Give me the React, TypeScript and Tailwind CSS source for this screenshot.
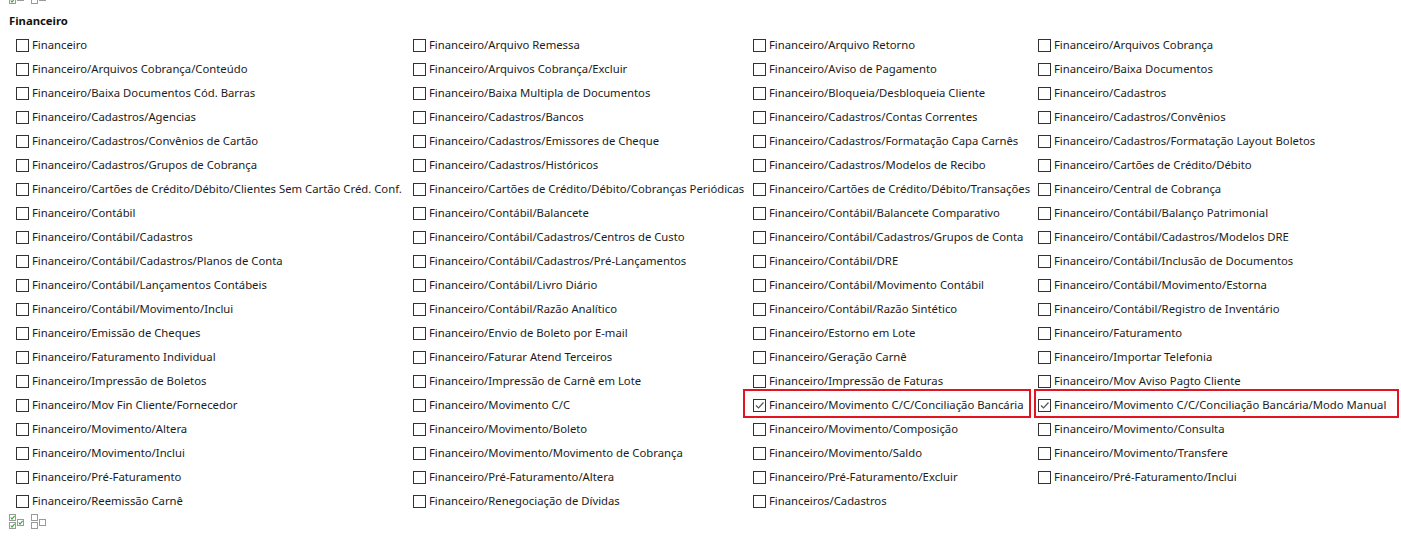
import React from "react";

const rows: [string, boolean][][] = [
  [["Financeiro", false], ["Financeiro/Arquivo Remessa", false], ["Financeiro/Arquivo Retorno", false], ["Financeiro/Arquivos Cobrança", false]],
  [["Financeiro/Arquivos Cobrança/Conteúdo", false], ["Financeiro/Arquivos Cobrança/Excluir", false], ["Financeiro/Aviso de Pagamento", false], ["Financeiro/Baixa Documentos", false]],
  [["Financeiro/Baixa Documentos Cód. Barras", false], ["Financeiro/Baixa Multipla de Documentos", false], ["Financeiro/Bloqueia/Desbloqueia Cliente", false], ["Financeiro/Cadastros", false]],
  [["Financeiro/Cadastros/Agencias", false], ["Financeiro/Cadastros/Bancos", false], ["Financeiro/Cadastros/Contas Correntes", false], ["Financeiro/Cadastros/Convênios", false]],
  [["Financeiro/Cadastros/Convênios de Cartão", false], ["Financeiro/Cadastros/Emissores de Cheque", false], ["Financeiro/Cadastros/Formatação Capa Carnês", false], ["Financeiro/Cadastros/Formatação Layout Boletos", false]],
  [["Financeiro/Cadastros/Grupos de Cobrança", false], ["Financeiro/Cadastros/Históricos", false], ["Financeiro/Cadastros/Modelos de Recibo", false], ["Financeiro/Cartões de Crédito/Débito", false]],
  [["Financeiro/Cartões de Crédito/Débito/Clientes Sem Cartão Créd. Conf.", false], ["Financeiro/Cartões de Crédito/Débito/Cobranças Periódicas", false], ["Financeiro/Cartões de Crédito/Débito/Transações", false], ["Financeiro/Central de Cobrança", false]],
  [["Financeiro/Contábil", false], ["Financeiro/Contábil/Balancete", false], ["Financeiro/Contábil/Balancete Comparativo", false], ["Financeiro/Contábil/Balanço Patrimonial", false]],
  [["Financeiro/Contábil/Cadastros", false], ["Financeiro/Contábil/Cadastros/Centros de Custo", false], ["Financeiro/Contábil/Cadastros/Grupos de Conta", false], ["Financeiro/Contábil/Cadastros/Modelos DRE", false]],
  [["Financeiro/Contábil/Cadastros/Planos de Conta", false], ["Financeiro/Contábil/Cadastros/Pré-Lançamentos", false], ["Financeiro/Contábil/DRE", false], ["Financeiro/Contábil/Inclusão de Documentos", false]],
  [["Financeiro/Contábil/Lançamentos Contábeis", false], ["Financeiro/Contábil/Livro Diário", false], ["Financeiro/Contábil/Movimento Contábil", false], ["Financeiro/Contábil/Movimento/Estorna", false]],
  [["Financeiro/Contábil/Movimento/Inclui", false], ["Financeiro/Contábil/Razão Analítico", false], ["Financeiro/Contábil/Razão Sintético", false], ["Financeiro/Contábil/Registro de Inventário", false]],
  [["Financeiro/Emissão de Cheques", false], ["Financeiro/Envio de Boleto por E-mail", false], ["Financeiro/Estorno em Lote", false], ["Financeiro/Faturamento", false]],
  [["Financeiro/Faturamento Individual", false], ["Financeiro/Faturar Atend Terceiros", false], ["Financeiro/Geração Carnê", false], ["Financeiro/Importar Telefonia", false]],
  [["Financeiro/Impressão de Boletos", false], ["Financeiro/Impressão de Carnê em Lote", false], ["Financeiro/Impressão de Faturas", false], ["Financeiro/Mov Aviso Pagto Cliente", false]],
  [["Financeiro/Mov Fin Cliente/Fornecedor", false], ["Financeiro/Movimento C/C", false], ["Financeiro/Movimento C/C/Conciliação Bancária", true], ["Financeiro/Movimento C/C/Conciliação Bancária/Modo Manual", true]],
  [["Financeiro/Movimento/Altera", false], ["Financeiro/Movimento/Boleto", false], ["Financeiro/Movimento/Composição", false], ["Financeiro/Movimento/Consulta", false]],
  [["Financeiro/Movimento/Inclui", false], ["Financeiro/Movimento/Movimento de Cobrança", false], ["Financeiro/Movimento/Saldo", false], ["Financeiro/Movimento/Transfere", false]],
  [["Financeiro/Pré-Faturamento", false], ["Financeiro/Pré-Faturamento/Altera", false], ["Financeiro/Pré-Faturamento/Excluir", false], ["Financeiro/Pré-Faturamento/Inclui", false]],
  [["Financeiro/Reemissão Carnê", false], ["Financeiro/Renegociação de Dívidas", false], ["Financeiros/Cadastros", false]],
];

function Box({ checked }: { checked: boolean }) {
  return (
    <span className="relative inline-block w-[13px] h-[13px] border border-[#333333] bg-white shrink-0">
      {checked && (
        <svg className="absolute left-0 top-0" width="11" height="11" viewBox="0 0 11 11">
          <path d="M2 5.5 L4.5 8 L9.5 2.5" fill="none" stroke="#555555" strokeWidth="1.2" />
        </svg>
      )}
    </span>
  );
}

function MultiIcon({ checked }: { checked: boolean }) {
  const boxes = [
    [1, 1],
    [1, 9],
    [9, 6],
  ];
  return (
    <svg width="16" height="16" viewBox="0 0 16 16">
      {boxes.map(([x, y], i) => (
        <g key={i}>
          <rect x={x + 0.5} y={y + 0.5} width="6" height="6" fill="#ffffff" stroke="#9a9a9a" strokeWidth="1" />
          {checked && (
            <path d={`M${x + 1.8} ${y + 3.5} L${x + 3} ${y + 5} L${x + 5.6} ${y + 1.8}`} fill="none" stroke="#3aa33a" strokeWidth="1.1" />
          )}
        </g>
      ))}
    </svg>
  );
}

function Icons() {
  return (
    <div className="flex items-center gap-[6px] pl-[8px]">
      <MultiIcon checked />
      <MultiIcon checked={false} />
    </div>
  );
}

export default function App() {
  return (
    <div
      className="w-[1401px] h-[540px] bg-white overflow-hidden text-[#1c1c1c] text-[11.3px]"
      style={{ fontFamily: '"Noto Sans", "Open Sans", sans-serif' }}
    >
      <div className="-mt-[12px]">
        <Icons />
      </div>
      <div className="pl-[9px] mt-[9px] h-[16px] leading-[16px] font-bold text-[#111111]">Financeiro</div>
      <div className="grid grid-cols-[397px_340px_285px_1fr] pl-[16px] mt-[4px]">
        {rows.map((r, ri) =>
          r.map(([label, checked], ci) => (
            <div key={`${ri}-${ci}`} className="relative h-[24px] flex items-center gap-[3px] whitespace-nowrap">
              <Box checked={checked} />
              <span className="leading-[16px]">{label}</span>
              {checked && ci === 2 && (
                <span className="absolute -left-[10px] right-[7px] -top-[4px] -bottom-[1px] border-2 border-[#e3131f]" />
              )}
              {checked && ci === 3 && (
                <span className="absolute -left-[4px] right-[2px] -top-[4px] -bottom-[1px] border-2 border-[#e3131f]" />
              )}
            </div>
          ))
        )}
      </div>
      <div className="mt-[0px]">
        <Icons />
      </div>
    </div>
  );
}
